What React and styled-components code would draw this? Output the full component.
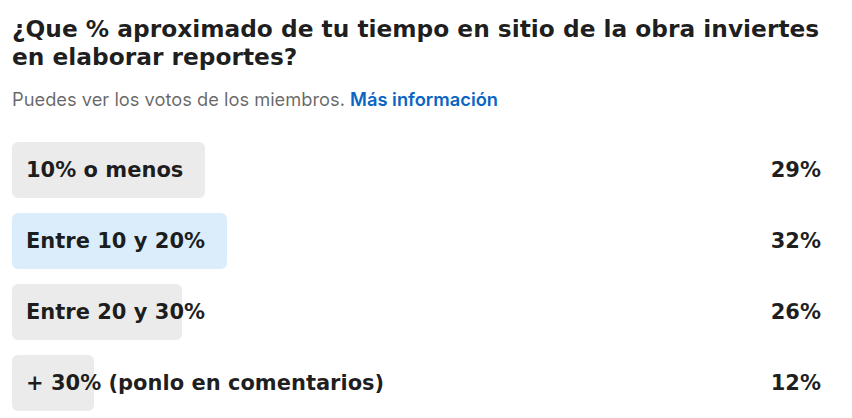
import React from "react"
import styled, { createGlobalStyle } from "styled-components"

const options = [
  { label: "10% o menos", pct: 29, fill: 28.9 },
  { label: "Entre 10 y 20%", pct: 32, fill: 32.2, selected: true },
  { label: "Entre 20 y 30%", pct: 26, fill: 25.5 },
  { label: "+ 30% (ponlo en comentarios)", pct: 12, fill: 12.3 },
]

const GlobalStyle = createGlobalStyle`
  body {
    margin: 0;
    background: #ffffff;
    font-family: Inter, "Noto Sans", "Liberation Sans", sans-serif;
    -webkit-font-smoothing: antialiased;
  }
`

const strong = `"DejaVu Sans", "Liberation Sans", sans-serif`

const s = {
  Poll: styled.section`
    display: flex;
    flex-direction: column;
    padding: 15px 31px 0 12px;
  `,
  Question: styled.h1`
    margin: 0;
    font-family: ${strong};
    font-size: 23.3px;
    line-height: 28px;
    font-weight: 700;
    color: rgba(0, 0, 0, 0.88);
  `,
  Note: styled.p`
    margin: 16px 0 0;
    font-size: 18.3px;
    line-height: 24px;
    color: rgba(0, 0, 0, 0.6);
  `,
  Link: styled.a`
    color: #0a66c2;
    font-weight: 600;
    text-decoration: none;
  `,
  Options: styled.ul`
    list-style: none;
    margin: 31px 0 0;
    padding: 0;
    display: flex;
    flex-direction: column;
    gap: 15px;
  `,
  Row: styled.li`
    display: flex;
    align-items: center;
    height: 56px;
  `,
  Track: styled.div`
    flex: 1;
    height: 100%;
    display: grid;
    align-items: center;
  `,
  Fill: styled.div`
    grid-area: 1 / 1;
    height: 100%;
    border-radius: 6px;
    background: ${(p) => (p.$selected ? "#dbedfa" : "#ebebeb")};
  `,
  Label: styled.span`
    grid-area: 1 / 1;
    padding-left: 14px;
    font-family: ${strong};
    font-size: 21px;
    font-weight: 700;
    color: rgba(0, 0, 0, 0.88);
    white-space: nowrap;
  `,
  Percent: styled.span`
    width: 142px;
    text-align: right;
    font-family: ${strong};
    font-size: 21px;
    font-weight: 700;
    color: rgba(0, 0, 0, 0.88);
  `,
}

const App = () => {
  return (
    <>
      <GlobalStyle />
      <s.Poll>
        <s.Question>
          ¿Que % aproximado de tu tiempo en sitio de la obra inviertes en
          elaborar reportes?
        </s.Question>
        <s.Note>
          Puedes ver los votos de los miembros.{" "}
          <s.Link href="#">Más información</s.Link>
        </s.Note>
        <s.Options>
          {options.map((option) => (
            <s.Row key={option.label}>
              <s.Track>
                <s.Fill
                  $selected={option.selected}
                  style={{ width: `${option.fill}%` }}
                />
                <s.Label>{option.label}</s.Label>
              </s.Track>
              <s.Percent>{option.pct}%</s.Percent>
            </s.Row>
          ))}
        </s.Options>
      </s.Poll>
    </>
  )
}

export default App
